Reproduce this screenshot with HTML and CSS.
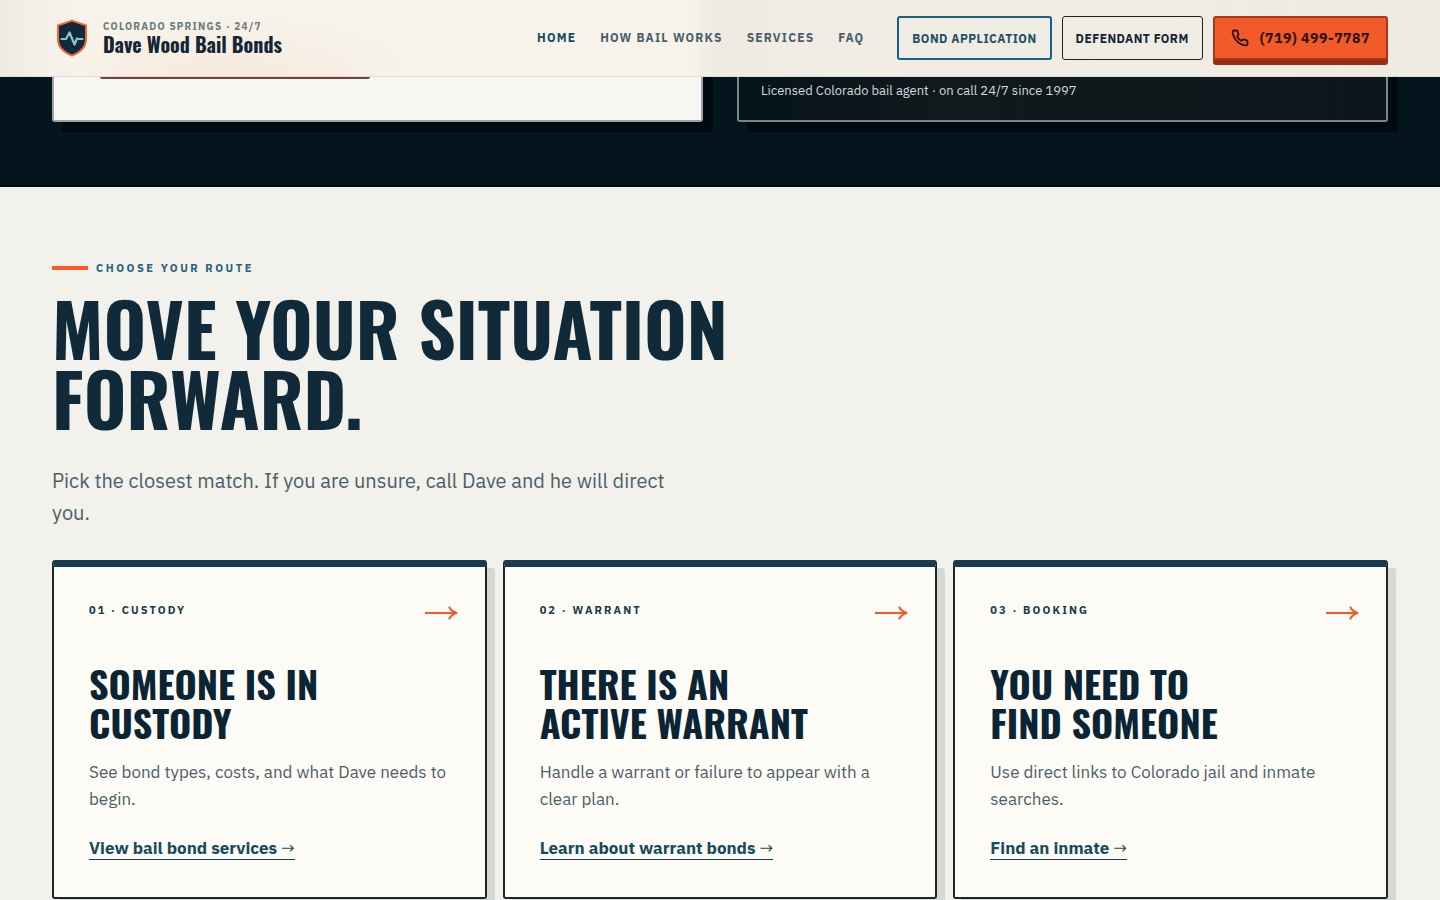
FILE: index.html
```html
<!DOCTYPE html>
<html lang="en">
<head>
<meta charset="utf-8">
<meta name="viewport" content="width=device-width, initial-scale=1">
<title>Dave Wood Bail Bonds</title>
<link rel="stylesheet" href="styles.css">
</head>
<body>
<header class="site-header">
  <a class="brand" href="#">
    <svg class="brand-mark" viewBox="0 0 40 40" aria-hidden="true">
      <path d="M20 2.600 34 7.400V21c0 8-5.600 13.400-14 16.600C11.600 34.400 6 29 6 21V7.400Z" fill="#102a3a" stroke="#f2683a" stroke-width="2" stroke-linejoin="round"/>
      <path d="M9.500 21h4.500l3.500-6.500 5 12 2.500-6 1.500.500h4" fill="none" stroke="#86c5d6" stroke-width="2.200" stroke-linejoin="round" stroke-linecap="round"/>
    </svg>
    <span class="brand-text">
      <span class="brand-place">Colorado Springs · 24/7</span>
      <span class="brand-name">Dave Wood Bail Bonds</span>
    </span>
  </a>
  <nav class="site-nav" aria-label="Main">
    <a class="nav-link nav-link-active" href="#">Home</a>
    <a class="nav-link" href="#">How Bail Works</a>
    <a class="nav-link" href="#">Services</a>
    <a class="nav-link" href="#">FAQ</a>
  </nav>
  <div class="header-actions">
    <a class="btn btn-teal" href="#">Bond Application</a>
    <a class="btn btn-ink" href="#">Defendant Form</a>
    <a class="btn btn-call" href="tel:7194997787">
      <svg class="phone" viewBox="0 0 24 24" aria-hidden="true"><path d="M22 16.920v3a2 2 0 0 1-2.180 2 19.790 19.790 0 0 1-8.630-3.070 19.500 19.500 0 0 1-6-6A19.790 19.790 0 0 1 2.120 4.180 2 2 0 0 1 4.110 2h3a2 2 0 0 1 2 1.720c.127.960.361 1.903.700 2.810a2 2 0 0 1-.450 2.110L8.090 9.910a16 16 0 0 0 6 6l1.270-1.270a2 2 0 0 1 2.110-.450c.907.339 1.850.573 2.810.700A2 2 0 0 1 22 16.920z"/></svg>
      (719) 499-7787
    </a>
  </div>
</header>
<main>
  <section class="hero">
    <div class="hero-card hero-card-light"><div class="hero-button-edge"></div></div>
    <div class="hero-card hero-card-dark"><p class="licence">Licensed Colorado bail agent · on call 24/7 since 1997</p></div>
  </section>
  <section class="routes">
    <p class="eyebrow">Choose your route</p>
    <h1 class="title">Move your situation<br>forward.</h1>
    <p class="lead">Pick the closest match. If you are unsure, call Dave and he will direct<br>you.</p>
    <div class="cards">
      <article class="card">
        <div class="card-head"><span class="card-label">01 · Custody</span><svg class="arrow" viewBox="0 0 34 16" aria-hidden="true"><path class="arrow-line" d="M1 8H32"/><path class="arrow-tip" d="M25 1.800C26.500 4.800 29 7 33 8 29 9 26.500 11.200 25 14.200"/></svg></div>
        <h2 class="card-title">Someone is in<br>custody</h2>
        <p class="card-text">See bond types, costs, and what Dave needs to<br>begin.</p>
        <a class="card-link" href="#">View bail bond services <span class="link-arrow">→</span></a>
      </article>
      <article class="card">
        <div class="card-head"><span class="card-label">02 · Warrant</span><svg class="arrow" viewBox="0 0 34 16" aria-hidden="true"><path class="arrow-line" d="M1 8H32"/><path class="arrow-tip" d="M25 1.800C26.500 4.800 29 7 33 8 29 9 26.500 11.200 25 14.200"/></svg></div>
        <h2 class="card-title">There is an<br>active warrant</h2>
        <p class="card-text">Handle a warrant or failure to appear with a<br>clear plan.</p>
        <a class="card-link" href="#">Learn about warrant bonds <span class="link-arrow">→</span></a>
      </article>
      <article class="card">
        <div class="card-head"><span class="card-label">03 · Booking</span><svg class="arrow" viewBox="0 0 34 16" aria-hidden="true"><path class="arrow-line" d="M1 8H32"/><path class="arrow-tip" d="M25 1.800C26.500 4.800 29 7 33 8 29 9 26.500 11.200 25 14.200"/></svg></div>
        <h2 class="card-title">You need to<br>find someone</h2>
        <p class="card-text">Use direct links to Colorado jail and inmate<br>searches.</p>
        <a class="card-link" href="#">Find an inmate <span class="link-arrow">→</span></a>
      </article>
    </div>
  </section>
</main>
</body>
</html>
```
FILE: styles.css
```css
:root {
  --display: Oswald, "Roboto Condensed", "Liberation Sans Narrow", "Liberation Sans", sans-serif;
  --sans: "IBM Plex Sans", Roboto, "Liberation Sans", sans-serif;
  --ink: #102a3a;
  --orange: #f15a29;
}
* { box-sizing: border-box; }
body { margin: 0; background: #f2f1ec; color: var(--ink); font-family: var(--sans); }
h1, h2, p { margin: 0; }
a { color: inherit; text-decoration: none; }

.site-header {
  position: sticky;
  top: 0;
  z-index: 2;
  display: flex;
  align-items: center;
  height: 77px;
  padding: 0 52px;
  border-bottom: 1px solid #dcdcd6;
  background:
    radial-gradient(ellipse 180px 60px at 230px 77px, rgba(246, 222, 207, .5), transparent),
    linear-gradient(90deg, #ecebe4 0, #f7f3ea 70px, #f7f3ea 690px, #edeae2 720px, #f1ede4 800px, #eeebe3 100%);
}
.brand { display: flex; align-items: center; gap: 11px; }
.brand-mark { width: 40px; height: 40px; }
.brand-text { display: flex; flex-direction: column; }
.brand-place { font-size: 10px; line-height: 12px; font-weight: 700; letter-spacing: .12em; text-transform: uppercase; color: #6b7a80; }
.brand-name { font-family: var(--display); font-size: 20px; line-height: 22px; font-weight: 700; color: #142634; }
.site-nav { display: flex; gap: 24px; margin-left: auto; }
.nav-link { font-size: 12px; line-height: 16px; font-weight: 700; letter-spacing: .1em; text-transform: uppercase; color: #48606c; }
.nav-link-active { color: #164a5e; }
.header-actions { display: flex; gap: 10px; margin-left: 33px; }
.btn { display: flex; align-items: center; justify-content: center; height: 44px; padding: 0 13px; border-radius: 3px; font-size: 12px; font-weight: 700; letter-spacing: .04em; text-transform: uppercase; }
.btn-teal { border: 2px solid #17607f; color: #1b5268; }
.btn-ink { border: 1px solid #1c2227; color: #142634; }
.btn-call { gap: 11px; padding: 0 16px; border: 2px solid #a93a19; background: var(--orange); box-shadow: 0 5px 0 #962f12; font-size: 14px; color: #2b1412; }
.phone { width: 18px; height: 18px; fill: none; stroke: #2b1412; stroke-width: 2.4; stroke-linecap: round; stroke-linejoin: round; }

.hero {
  display: grid;
  grid-template-columns: 1fr 1fr;
  gap: 34px;
  padding: 0 52px 63px;
  border-bottom: 2px solid #01080d;
  background: #05151d;
}
.hero-card { height: 45px; border: 2px solid #9ba3a5; border-top: 0; border-radius: 0 0 3px 3px; box-shadow: 10px 10px 0 #010a10, 10px 0 0 #010a10; }
.hero-card-light { padding: 0 46px; background: #f7f6f2; }
.hero-card-dark { padding: 4px 22px; border-color: #738a8d; background: linear-gradient(90deg, #05131a, #10191c 30%, #0d171b); }
.hero-button-edge { width: 270px; height: 2px; border-radius: 0 0 3px 3px; background: #7b3f34; }
.licence { font-size: 13px; line-height: 20px; color: #d3dbdc; }

.routes { padding: 73px 52px 80px; }
.eyebrow { display: flex; align-items: center; gap: 8px; font-size: 11px; line-height: 16px; font-weight: 700; letter-spacing: .23em; text-transform: uppercase; color: #25617a; }
.eyebrow::before { content: ""; width: 36px; height: 4px; background: #ff5a26; }
.title { margin-top: 16px; font-family: var(--display); font-size: 73px; line-height: 70px; font-weight: 700; text-transform: uppercase; }
.lead { margin-top: 33px; font-size: 20px; line-height: 32px; color: #4a5f6b; }
.cards { display: grid; grid-template-columns: repeat(3, 1fr); gap: 16px; margin-top: 31px; }
.card { padding: 35px 35px 37px; border: 2px solid #1c2528; border-top: 7px solid #173c4d; border-radius: 3px; background: #fcfbf6; box-shadow: 8px 8px 0 #d6d8d4; }
.card-head { display: flex; align-items: flex-start; justify-content: space-between; height: 16px; }
.card-label { font-size: 11px; line-height: 16px; font-weight: 700; letter-spacing: .19em; text-transform: uppercase; color: #173c4d; }
.arrow { width: 34px; height: 16px; margin: 3px -8px 0 0; }
.arrow-line { fill: none; stroke: var(--orange); stroke-width: 2; }
.arrow-tip { fill: none; stroke: var(--orange); stroke-width: 2; }
.card-title { margin-top: 46px; font-family: var(--display); font-size: 38px; line-height: 39px; font-weight: 700; text-transform: uppercase; color: #0b2433; }
.card-text { margin-top: 17px; font-size: 17px; line-height: 27px; color: #4d5f69; }
.card-link { display: inline-block; margin-top: 24px; border-bottom: 1px solid #173c4d; font-size: 17px; line-height: 22px; font-weight: 700; color: #174a5c; }
.link-arrow { font-weight: 400; }
```
